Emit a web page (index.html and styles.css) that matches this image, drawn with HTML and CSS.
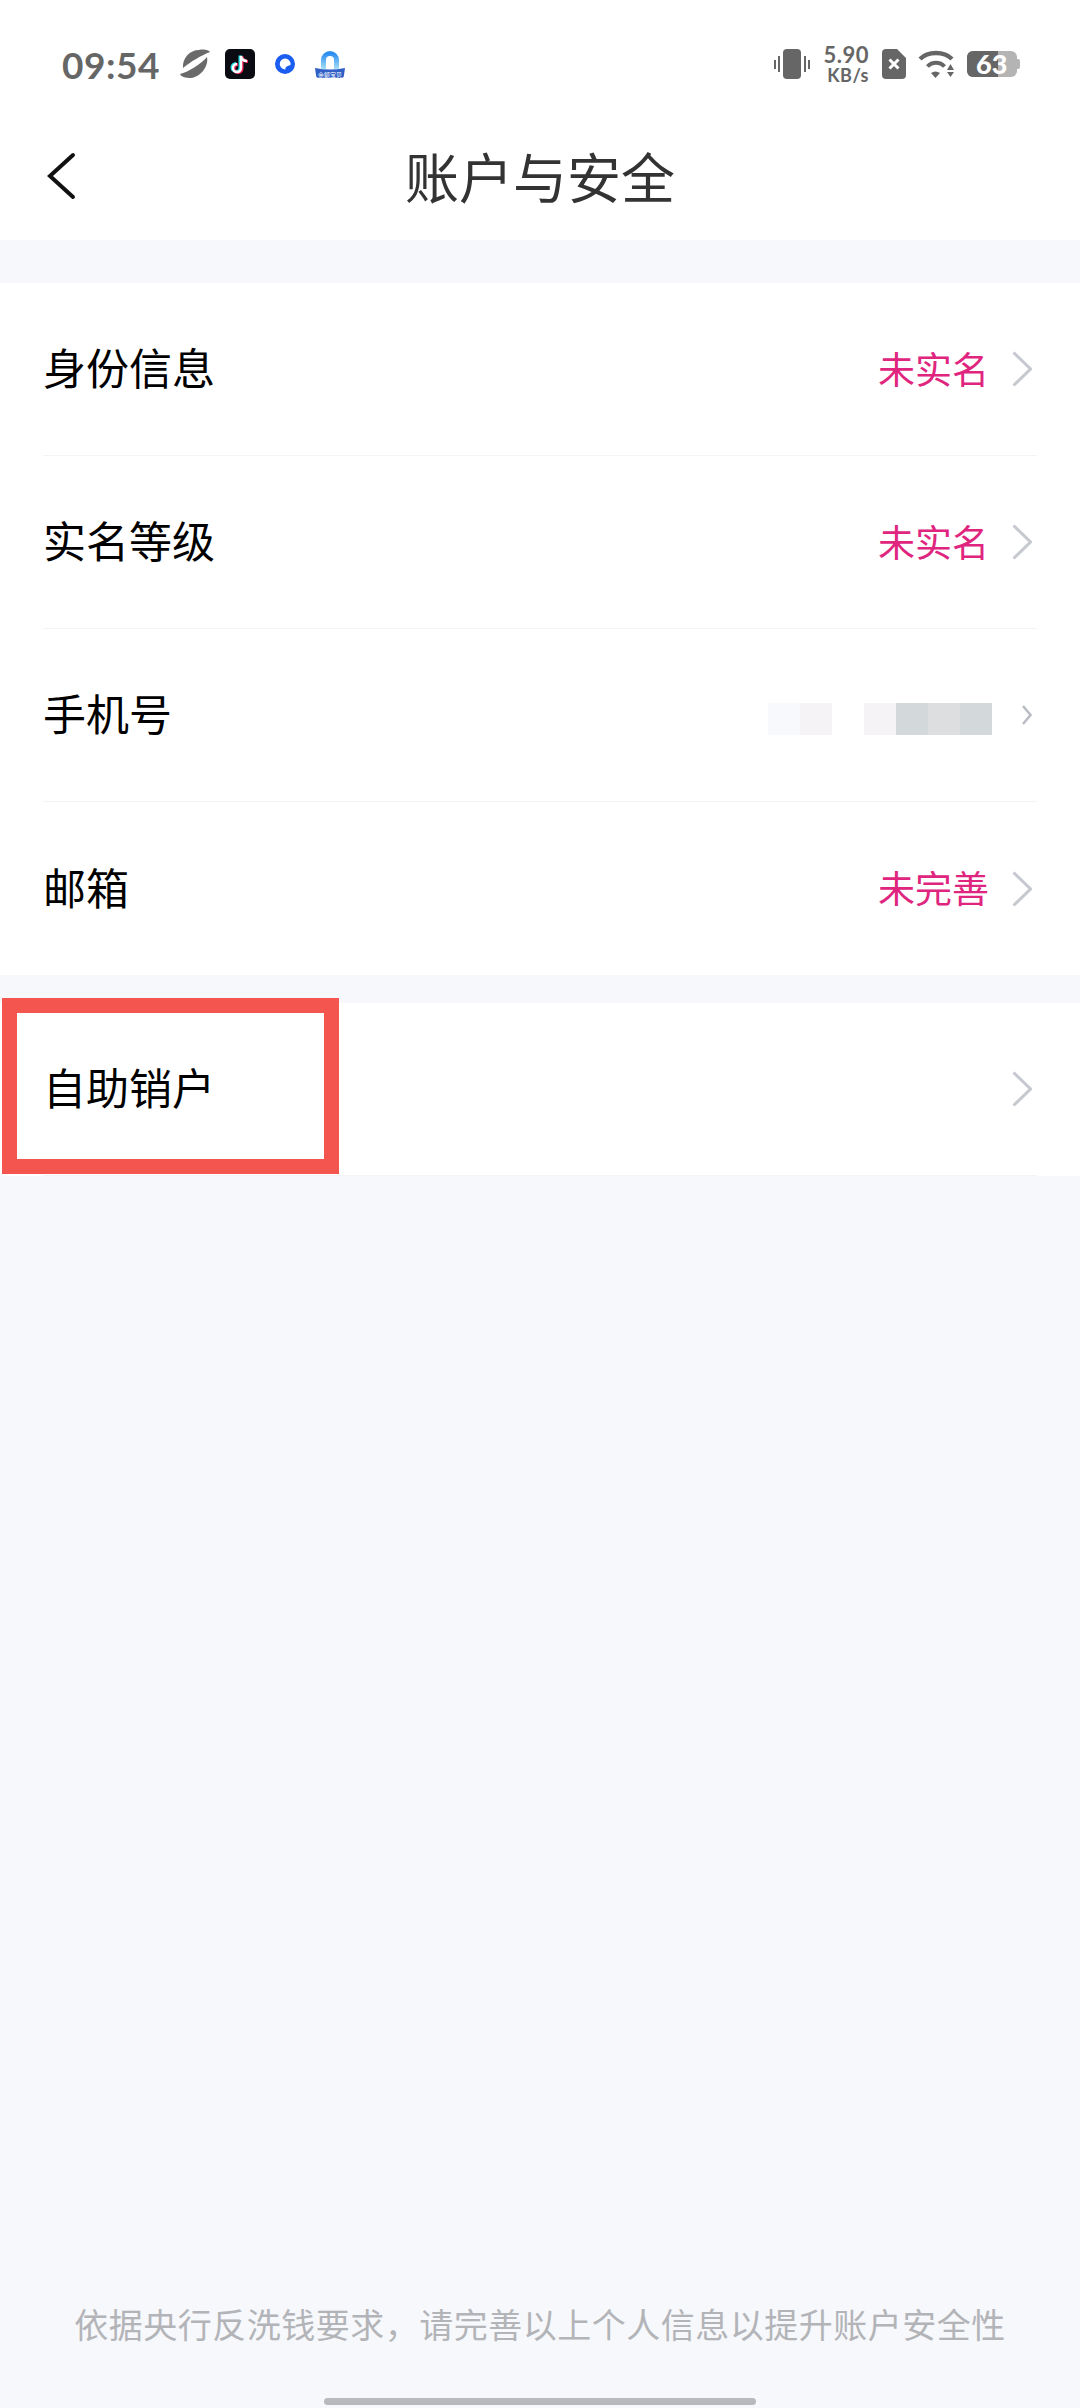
FILE: index.html
```html
<!DOCTYPE html>
<html>
<head>
    <meta charset="UTF-8">
    <title>账户与安全</title>
    <link rel="stylesheet" href="styles.css">
</head>
<body>
    <div class="page">
        <div class="top">
            <div class="status-bar">
                <div class="status-left">
                    <span class="time">09:54</span>
                    <svg class="ic-planet" viewBox="0 0 30 30"><path d="M3 19 C2 9 10 1 19 1 C24 0 29 1 30 3 C22 6 10 13 3 19 Z" fill="#6a6a6a"/><path d="M0 25 C8 23 20 16 27 8 C29 18 20 28 11 29 C6 29 1 28 0 25 Z" fill="#6a6a6a"/></svg>
                    <svg class="ic-tiktok" viewBox="0 0 30 30"><rect width="30" height="30" rx="5" fill="#0b0b14"/><path d="M16 7 V19 A4 4 0 1 1 12 15 M16 7 C16.500 10 19 12 22 12" fill="none" stroke="#25e0e6" stroke-width="3" transform="translate(-1 -.6)"/><path d="M16 7 V19 A4 4 0 1 1 12 15 M16 7 C16.500 10 19 12 22 12" fill="none" stroke="#f5245c" stroke-width="3" transform="translate(1 .6)"/><path d="M16 7 V19 A4 4 0 1 1 12 15 M16 7 C16.500 10 19 12 22 12" fill="none" stroke="#fff" stroke-width="2.400"/></svg>
                    <svg class="ic-blue" viewBox="0 0 20 20"><circle cx="10" cy="10" r="10" fill="#1a5df0"/><path d="M10 4.500 A5.500 5.500 0 1 0 10.500 15.500 C10 13 12 12 15.500 11 A5.500 5.500 0 0 0 10 4.500 Z" fill="#fff"/></svg>
                    <svg class="ic-lock" viewBox="0 0 30 28"><defs><linearGradient id="arch" x1="0" y1="0" x2="0" y2="1"><stop offset="0" stop-color="#2a8df0"/><stop offset="1" stop-color="#a5e0f8"/></linearGradient></defs><path d="M8.500 19 V10 A6.500 6.500 0 0 1 21.500 10 V19" fill="none" stroke="url(#arch)" stroke-width="5"/><path d="M0 18 Q15 21 30 18 L29 25 Q29 28 26 28 H4 Q1 28 1 25 Z" fill="#2f5fc6"/><text class="lock-text" x="15" y="26.500" text-anchor="middle">余额宝贝</text></svg>
                </div>
                <div class="status-right">
                    <svg class="ic-vibrate" viewBox="0 0 36 30"><rect x="9" y="0" width="18" height="30" rx="4" fill="#666"/><path d="M5 7 V23 M1 11 V20 M31 7 V23 M35 11 V20" stroke="#666" stroke-width="2"/></svg>
                    <div class="speed"><span class="speed-num">5.90</span><span class="speed-unit">KB/s</span></div>
                    <svg class="ic-sim" viewBox="0 0 24 30"><path d="M4 0 H15 L24 9 V26 Q24 30 20 30 H4 Q0 30 0 26 V4 Q0 0 4 0 Z" fill="#666"/><path d="M7.500 10.500 L16.500 19.500 M16.500 10.500 L7.500 19.500" stroke="#fff" stroke-width="3"/></svg>
                    <svg class="ic-wifi" viewBox="0 0 36 28"><path d="M2 9 C10 1 26 1 34 9" fill="none" stroke="#666" stroke-width="4.500"/><path d="M9.500 16.500 C14 11.500 22 11.500 26.500 16.500" fill="none" stroke="#666" stroke-width="4"/><path d="M13 23 C16 21 19 21 22 23 L17.500 28 Z" fill="#666"/><path d="M29 20 L32.500 14 L36 20 Z M29 22 H36 L32.500 27 Z" fill="#666"/></svg>
                    <div class="battery">
                        <div class="battery-body">
                            <div class="battery-fill"></div>
                            <span class="battery-num">63</span>
                        </div>
                        <div class="battery-cap"></div>
                    </div>
                </div>
            </div>
            <div class="nav-bar">
                <svg class="back" viewBox="0 0 30 48"><path d="M27 3 L4 24 L27 45" fill="none" stroke="#111" stroke-width="4" stroke-linecap="round"/></svg>
                <div class="nav-title">账户与安全</div>
            </div>
        </div>

        <div class="list first">
            <div class="row">
                <div class="row-label">身份信息</div>
                <div class="row-right">
                    <span class="row-value">未实名</span>
                    <svg class="arrow" viewBox="0 0 20 36"><path d="M1.500 1.500 L18.500 18 L1.500 34.500" fill="none" stroke="#c6c9cf" stroke-width="3"/></svg>
                </div>
            </div>
            <div class="row">
                <div class="row-label">实名等级</div>
                <div class="row-right">
                    <span class="row-value">未实名</span>
                    <svg class="arrow" viewBox="0 0 20 36"><path d="M1.500 1.500 L18.500 18 L1.500 34.500" fill="none" stroke="#c6c9cf" stroke-width="3"/></svg>
                </div>
            </div>
            <div class="row">
                <div class="row-label">手机号</div>
                <div class="row-right">
                    <div class="mosaic">
                        <i class="m1"></i><i class="m2"></i><i class="m0"></i><i class="m2"></i><i class="m3"></i><i class="m4"></i><i class="m3"></i>
                    </div>
                    <svg class="arrow-small" viewBox="0 0 10 20"><path d="M1 1 L8.500 10 L1 19" fill="none" stroke="#b9bdc3" stroke-width="2.500"/></svg>
                </div>
            </div>
            <div class="row">
                <div class="row-label">邮箱</div>
                <div class="row-right">
                    <span class="row-value">未完善</span>
                    <svg class="arrow" viewBox="0 0 20 36"><path d="M1.500 1.500 L18.500 18 L1.500 34.500" fill="none" stroke="#c6c9cf" stroke-width="3"/></svg>
                </div>
            </div>
        </div>

        <div class="list second">
            <div class="row">
                <div class="row-label">自助销户</div>
                <div class="row-right">
                    <svg class="arrow" viewBox="0 0 20 36"><path d="M1.500 1.500 L18.500 18 L1.500 34.500" fill="none" stroke="#c6c9cf" stroke-width="3"/></svg>
                </div>
            </div>
            <div class="mark"></div>
        </div>

        <div class="footer">
            <div class="footer-text">依据央行反洗钱要求，请完善以上个人信息以提升账户安全性</div>
            <div class="home-bar"></div>
        </div>
    </div>
</body>
</html>
```
FILE: styles.css
```css
*{
    margin: 0;
    padding: 0;
    box-sizing: border-box;
}
html,body{
    width: 100%;
    height: 100%;
}
body{
    font-family: "Noto Sans CJK SC", "Noto Sans", sans-serif;
    background-color: #f7f8fc;
}
.page{
    display: flex;
    flex-direction: column;
    width: 1080px;
    height: 2408px;
}
.top{
    height: 240px;
    background-color: #ffffff;
}
.status-bar{
    display: flex;
    justify-content: space-between;
    align-items: center;
    height: 128px;
    padding: 0 60px 0 62px;
}
.status-left{
    display: flex;
    align-items: center;
}
.status-right{
    display: flex;
    align-items: center;
}
.time{
    width: 118px;
    font-family: "Lato", sans-serif;
    font-size: 37px;
    font-weight: 700;
    letter-spacing: 0.5px;
    color: #666666;
}
.ic-planet{
    width: 30px;
    height: 30px;
}
.ic-tiktok{
    width: 30px;
    height: 30px;
    margin-left: 15px;
}
.ic-blue{
    width: 20px;
    height: 20px;
    margin-left: 20px;
}
.ic-lock{
    width: 30px;
    height: 28px;
    margin-left: 20px;
}
.lock-text{
    font-size: 6px;
    fill: #ffffff;
}
.ic-vibrate{
    width: 36px;
    height: 30px;
}
.speed{
    display: flex;
    flex-direction: column;
    align-items: flex-end;
    width: 47px;
    margin-left: 12px;
    font-family: "Lato", sans-serif;
    font-weight: 700;
    color: #666666;
}
.speed-num{
    display: block;
    font-size: 22px;
    line-height: 22px;
    letter-spacing: 0.5px;
}
.speed-unit{
    display: block;
    font-size: 18px;
    line-height: 18px;
    letter-spacing: 0.5px;
}
.ic-sim{
    width: 24px;
    height: 30px;
    margin-left: 13px;
}
.ic-wifi{
    width: 36px;
    height: 28px;
    margin-left: 12px;
}
.battery{
    display: flex;
    align-items: center;
    margin-left: 13px;
}
.battery-body{
    position: relative;
    width: 50px;
    height: 26px;
    border-radius: 6px;
    background-color: #b4b4b4;
}
.battery-fill{
    width: 31px;
    height: 100%;
    border-radius: 6px 0 0 6px;
    background-color: #666666;
}
.battery-num{
    position: absolute;
    top: 0;
    left: 9px;
    font-family: "Lato", sans-serif;
    font-size: 27px;
    font-weight: 900;
    line-height: 26px;
    color: #ffffff;
}
.battery-cap{
    width: 3px;
    height: 10px;
    border-radius: 0 2px 2px 0;
    background-color: #b4b4b4;
}
.nav-bar{
    display: grid;
    grid-template-columns: 1fr auto 1fr;
    align-items: center;
    height: 112px;
    padding-bottom: 16px;
}
.back{
    width: 30px;
    height: 48px;
    margin-left: 46px;
}
.nav-title{
    font-size: 54px;
    line-height: 64px;
    color: #333333;
}
.list{
    background-color: #ffffff;
}
.first{
    margin-top: 43px;
}
.second{
    position: relative;
    margin-top: 28px;
}
.row{
    display: flex;
    justify-content: space-between;
    align-items: center;
    height: 173px;
    margin: 0 43px;
    border-bottom: 1px solid #f3f4f6;
}
.row:last-child{
    border-bottom: 0;
}
.row-label{
    margin-bottom: 6px;
    font-size: 43px;
    color: #000000;
}
.row-right{
    display: flex;
    align-items: center;
}
.row-value{
    margin-bottom: 3px;
    font-size: 37px;
    color: #e0257f;
}
.arrow{
    width: 20px;
    height: 36px;
    margin: 0 5px 0 23px;
}
.arrow-small{
    width: 10px;
    height: 20px;
    margin: 0 5px 0 30px;
}
.mosaic{
    display: flex;
    margin-top: 8px;
}
.mosaic i{
    display: block;
    width: 32px;
    height: 32px;
}
.m0{
    background-color: #ffffff;
}
.m1{
    background-color: #f7f9fd;
}
.m2{
    background-color: #f6f3f6;
}
.m3{
    background-color: #d3d8db;
}
.m4{
    background-color: #dcdedf;
}
.mark{
    position: absolute;
    top: -5px;
    left: 2px;
    width: 337px;
    height: 176px;
    border: 15px solid #f4564f;
}
.footer{
    display: flex;
    flex-direction: column;
    align-items: center;
    margin-top: auto;
    padding-bottom: 3px;
}
.footer-text{
    font-size: 34px;
    letter-spacing: 0.5px;
    line-height: 50px;
    color: #b3b4b8;
}
.home-bar{
    width: 432px;
    height: 7px;
    margin-top: 49px;
    border-radius: 4px;
    background-color: #b8b9bd;
}
```
